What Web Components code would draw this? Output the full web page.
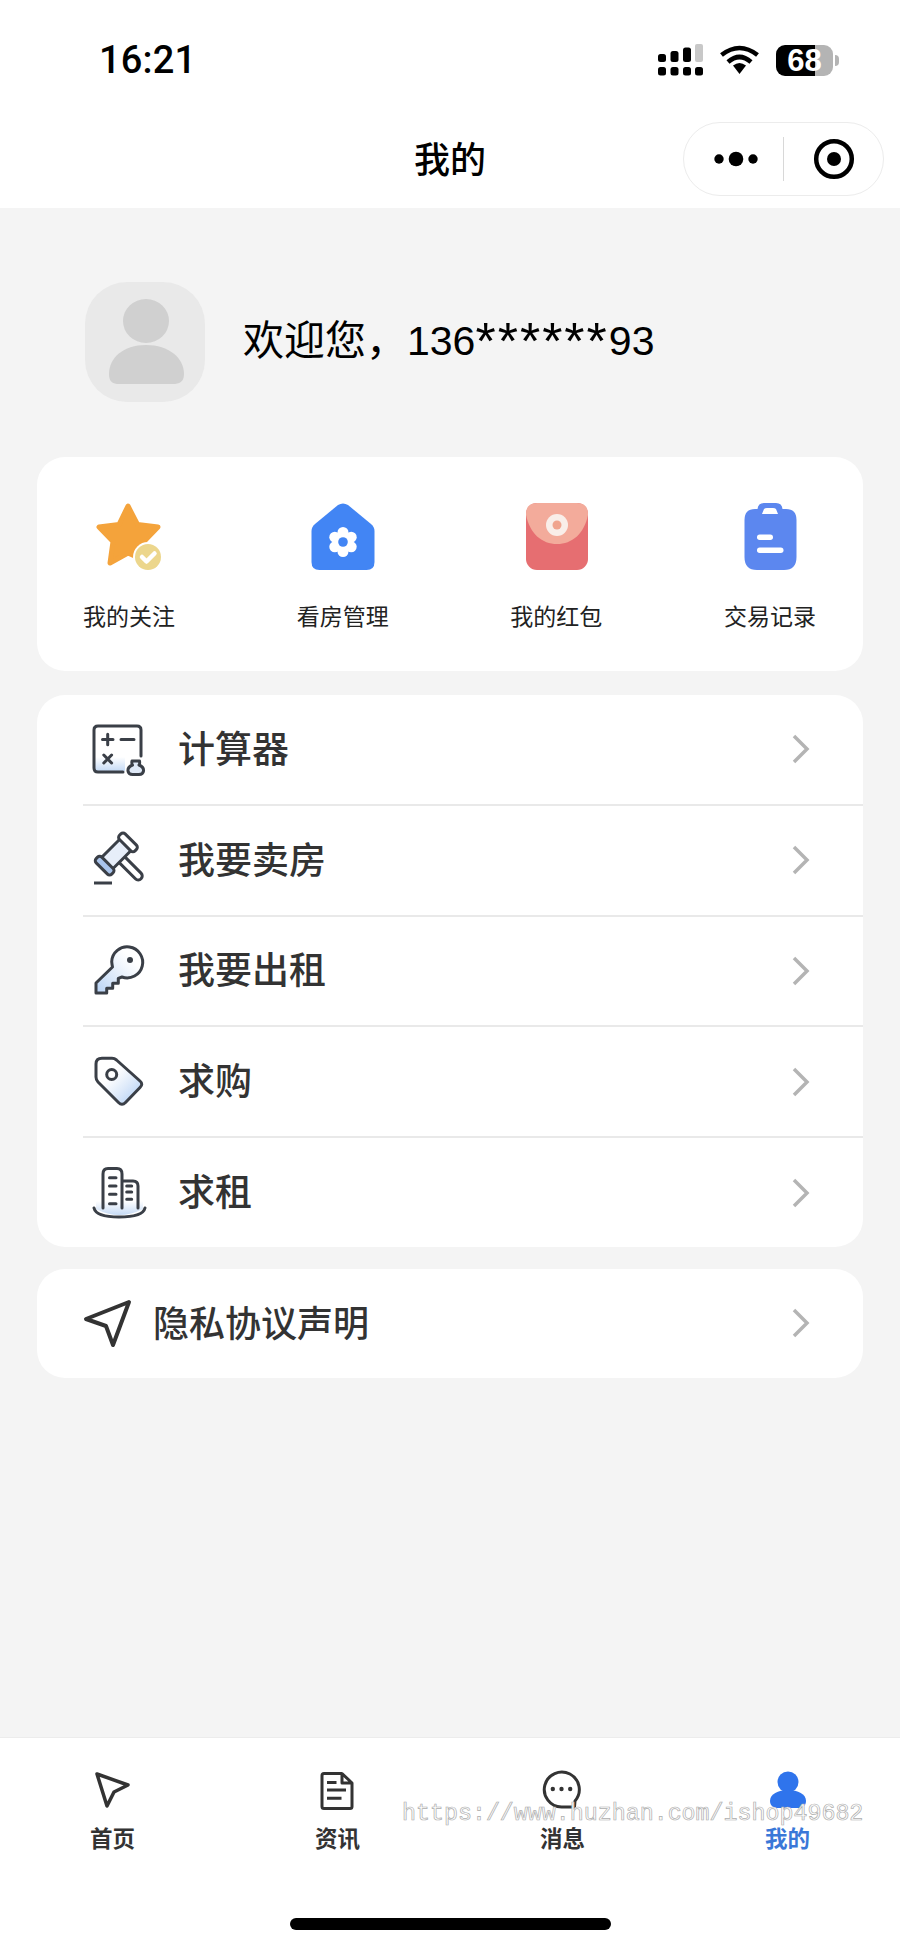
<!DOCTYPE html>
<html lang="zh">
<head>
<meta charset="utf-8">
<title>我的</title>
<style>
    html, body { margin: 0; padding: 0; }
    body {
        width: 900px;
        min-height: 1948px;
        display: flex;
        flex-direction: column;
        background: #f4f4f4;
        font-family: "Liberation Sans", "Noto Sans CJK SC", sans-serif;
    }
    .defs { display: block; width: 0; height: 0; }
</style>
</head>
<body>
<svg class="defs" width="0" height="0">
    <defs>
        <linearGradient id="fadeDown" x1="0" y1="0" x2="0" y2="1">
            <stop offset="0" stop-color="#c5daf5" stop-opacity="0"/>
            <stop offset="1" stop-color="#c5daf5"/>
        </linearGradient>
        <linearGradient id="fadeLeft" x1="1" y1="0" x2="0" y2="1">
            <stop offset="0.25" stop-color="#c5daf5" stop-opacity="0"/>
            <stop offset="1" stop-color="#b5d1f5"/>
        </linearGradient>
        <linearGradient id="fadeRight" x1="0" y1="0" x2="1" y2="1">
            <stop offset="0.35" stop-color="#c5daf5" stop-opacity="0"/>
            <stop offset="0.9" stop-color="#b5d1f5"/>
        </linearGradient>
    </defs>
</svg>

<status-bar></status-bar>
<nav-bar>我的</nav-bar>

<page-body>
    <user-head><span>欢迎您，136<i>******</i>93</span></user-head>

    <quick-card>
        <quick-item label="我的关注">
            <svg viewBox="0 0 68 68" width="68" height="68">
                <path d="M33 3 L42.500 21.500 L63 24 L49 38.500 L53 59 L33 50 L15 60 L18 38.500 L4 24 L24 21.500 Z" fill="#f4a33b" stroke="#f4a33b" stroke-width="5" stroke-linejoin="round"/>
                <circle cx="53" cy="54" r="15" fill="#fff"/>
                <circle cx="53" cy="54" r="13" fill="#ecd68c"/>
                <path d="M47 54 L51.500 58.500 L59.500 50.500" fill="none" stroke="#fff" stroke-width="4.500" stroke-linecap="round" stroke-linejoin="round"/>
            </svg>
        </quick-item>
        <quick-item label="看房管理">
            <svg viewBox="0 0 68 68" width="68" height="68">
                <path d="M29 2 Q34 -1 39 2 L62 21 Q65.500 24 65.500 28 L65.500 59 Q65.500 67 57.500 67 L10.500 67 Q2.500 67 2.500 59 L2.500 28 Q2.500 24 6 21 Z" fill="#4285f4"/>
                <g fill="#fff">
                    <circle cx="34" cy="39" r="10"/>
                    <circle cx="34" cy="29.500" r="5.500"/>
                    <circle cx="34" cy="48.500" r="5.500"/>
                    <circle cx="25.800" cy="34.200" r="5.500"/>
                    <circle cx="42.200" cy="34.200" r="5.500"/>
                    <circle cx="25.800" cy="43.800" r="5.500"/>
                    <circle cx="42.200" cy="43.800" r="5.500"/>
                </g>
                <circle cx="34" cy="39" r="4.800" fill="#4285f4"/>
            </svg>
        </quick-item>
        <quick-item label="我的红包">
            <svg viewBox="0 0 68 68" width="68" height="68">
                <rect x="4" y="0" width="62" height="67" rx="11" fill="#e66e71"/>
                <path d="M4 11 Q4 0 15 0 L55 0 Q66 0 66 11 L66 12 C62 31 50 41 35 41 C20 41 8 31 4 12 Z" fill="#f3ab9b"/>
                <circle cx="35" cy="22" r="11" fill="#f9eee9"/>
                <circle cx="35" cy="22" r="4.500" fill="#f0a48e"/>
            </svg>
        </quick-item>
        <quick-item label="交易记录">
            <svg viewBox="0 0 68 68" width="68" height="68">
                <path d="M8.500 17 Q8.500 6 19 6 L21.500 6 Q22 0 28 0 L40 0 Q46 0 46.500 6 L50 6 Q60.500 6 60.500 17 L60.500 54 Q60.500 67 48 67 L21 67 Q8.500 67 8.500 54 Z" fill="#5c87ef"/>
                <path d="M28 6 Q29 5 31 5 L37 5 Q39 5 40 6 L42 11 L26 11 Z" fill="#fff"/>
                <rect x="21" y="31.500" width="16" height="5.500" rx="2.700" fill="#fff"/>
                <rect x="21" y="44.500" width="26.500" height="5.500" rx="2.700" fill="#fff"/>
            </svg>
        </quick-item>
    </quick-card>

    <list-card>
        <list-row>
            <svg slot="icon" viewBox="0 0 60 60" width="60" height="60">
                <path d="M6 38 L6 50 Q6 52 8 52 L36 52 L36 38 Z" fill="url(#fadeDown)"/>
                <path d="M34 53 L9 53 Q5 53 5 49 L5 11 Q5 7 9 7 L48 7 Q52 7 52 11 L52 37" fill="none" stroke="#3a3f47" stroke-width="3" stroke-linecap="round"/>
                <path d="M13.500 20.500 H24 M18.700 15.300 V25.700 M32 20.500 H45 M14.800 36 L22.600 44 M22.600 36 L14.800 44" fill="none" stroke="#3a3f47" stroke-width="3" stroke-linecap="round"/>
                <path d="M43 42 L50.500 42 Q51 45 50 46 Q55 48 54.500 52 Q54 55.500 50 55.500 L43.500 55.500 Q39.500 55.500 39 52 Q38.500 48 43.500 46 Q42.500 45 43 42 Z" fill="#dfe9f7" stroke="#3a3f47" stroke-width="3" stroke-linejoin="round"/>
            </svg>
            计算器
        </list-row>
        <list-row>
            <svg slot="icon" viewBox="0 0 60 60" width="60" height="60">
                <g transform="translate(27.300 24) rotate(45)" stroke="#3a3f47" stroke-width="3" stroke-linejoin="round">
                    <rect x="2" y="-4" width="33" height="8" rx="4" fill="#fff"/>
                    <rect x="-8" y="-14" width="16" height="28" fill="#e7eef9"/>
                    <rect x="-11" y="-20.500" width="22" height="8" rx="3" fill="#fff"/>
                    <rect x="-11" y="12.500" width="22" height="8" rx="3" fill="#a9c4ec"/>
                </g>
                <path d="M5 53 H23" stroke="#3a3f47" stroke-width="3"/>
            </svg>
            我要卖房
        </list-row>
        <list-row>
            <svg slot="icon" viewBox="0 0 60 60" width="60" height="60">
                <path d="M7 42 L7 52 L17.700 52 L17.700 47.300 L23.700 47.300 L23.700 42.300 L29.300 42.300 L29.300 37.300 L33 36 A15.500 15.500 0 1 0 22.700 20.700 Q23 24 23.500 26 Z" fill="url(#fadeLeft)" stroke="#3a3f47" stroke-width="3" stroke-linejoin="round"/>
                <circle cx="41" cy="19" r="3" fill="#3a3f47"/>
            </svg>
            我要出租
        </list-row>
        <list-row>
            <svg slot="icon" viewBox="0 0 60 60" width="60" height="60">
                <path d="M7 12 Q7 6.300 13 6.300 L23 6.300 Q25.500 6.300 27.500 8 L51 29 Q54.500 32 51 35.500 L36.500 50.500 Q33 54 29.500 50.500 L9 30 Q7 28 7 25 Z" fill="url(#fadeRight)" stroke="#3a3f47" stroke-width="3" stroke-linejoin="round"/>
                <circle cx="22.700" cy="22.500" r="5" fill="none" stroke="#3a3f47" stroke-width="3"/>
            </svg>
            求购
        </list-row>
        <list-row last>
            <svg slot="icon" viewBox="0 0 60 60" width="60" height="60">
                <path d="M7 46 Q30 58 54 46 L54 38 L7 38 Z" fill="url(#fadeDown)"/>
                <path d="M14 45 L14 11 Q14 5.500 19 5.500 L28 5.500 Q33 5.500 33 11 L33 45 M33 18 L44 18 Q49 18 49 23 L49 45" fill="none" stroke="#3a3f47" stroke-width="3" stroke-linecap="round" stroke-linejoin="round"/>
                <path d="M20.500 14.700 H27 M20.500 23 H27 M20.500 31.300 H27 M20.500 40.700 H27 M37.700 23 H42.700 M37.700 29 H42.700 M37.700 36.300 H42.700" fill="none" stroke="#3a3f47" stroke-width="3" stroke-linecap="round"/>
                <path d="M5 45 Q7 54 30 54 Q54 54 56 45" fill="none" stroke="#3a3f47" stroke-width="3" stroke-linecap="round"/>
            </svg>
            求租
        </list-row>
    </list-card>

    <list-card>
        <list-row single>
            <svg slot="icon" viewBox="0 0 50 50" width="50" height="50">
                <path d="M46 4 L3 21 L23 28 L30 47 Z" fill="none" stroke="#333" stroke-width="4" stroke-linejoin="round"/>
            </svg>
            隐私协议声明
        </list-row>
    </list-card>
</page-body>

<tab-bar>
    <tab-item label="首页">
        <svg viewBox="0 0 48 48" width="48" height="48">
            <path d="M8 6 L39 17 L25 24 L18 38 Z" fill="none" stroke="#333" stroke-width="3.500" stroke-linejoin="round"/>
        </svg>
    </tab-item>
    <tab-item label="资讯">
        <svg viewBox="0 0 48 48" width="48" height="48">
            <path d="M28 5.500 L10 5.500 Q8 5.500 8 7.500 L8 38.500 Q8 40.500 10 40.500 L36 40.500 Q38 40.500 38 38.500 L38 15 L28 5.500 L28 15 L38 15" fill="none" stroke="#333" stroke-width="3" stroke-linejoin="round"/>
            <path d="M13 14.500 H22.500 M13 22 H32 M13 30.300 H27.500" fill="none" stroke="#333" stroke-width="3"/>
        </svg>
    </tab-item>
    <tab-item label="消息">
        <svg viewBox="0 0 48 48" width="48" height="48">
            <path d="M22.500 39 A17.500 17.500 0 1 1 36 33 L35.500 39 Z" fill="none" stroke="#333" stroke-width="3" stroke-linejoin="round"/>
            <circle cx="13.800" cy="21" r="2.200" fill="#333"/>
            <circle cx="22.500" cy="21" r="2.200" fill="#333"/>
            <circle cx="31.200" cy="21" r="2.200" fill="#333"/>
        </svg>
    </tab-item>
    <tab-item label="我的" active>
        <svg viewBox="0 0 48 48" width="48" height="48">
            <circle cx="24" cy="14" r="10.500" fill="#2f74ec"/>
            <path d="M6 33 C6 26 14 22 24 22 C34 22 42 26 42 33 C42 38 38 40 34 40 L14 40 C10 40 6 38 6 33 Z" fill="#2f74ec"/>
        </svg>
    </tab-item>
</tab-bar>

<script>
class StatusBar extends HTMLElement {
    constructor() {
        super();
        const shadowRoot = this.attachShadow({mode: 'open'});
        shadowRoot.innerHTML = `
            <style>
                :host {
                    display: flex;
                    justify-content: space-between;
                    align-items: center;
                    height: 120px;
                    box-sizing: border-box;
                    padding: 0 61px 0 99px;
                    background: #fff;
                    color: #000;
                }
                .time {
                    font: 500 38px Roboto, "Liberation Sans", sans-serif;
                    letter-spacing: 0.2px;
                }
                .icons { display: flex; align-items: center; gap: 17px; }
                svg { display: block; }
                .battery {
                    width: 57px;
                    height: 31px;
                    border-radius: 9px;
                    background: linear-gradient(90deg, #000 39px, #b4b4b4 39px);
                    color: #fff;
                    font: bold 31px/31px "Liberation Sans", sans-serif;
                    text-align: center;
                }
                .nub { width: 4px; height: 11px; margin-left: 2px; border-radius: 0 4px 4px 0; background: #b4b4b4; }
                .bat { display: flex; align-items: center; }
            </style>
            <div class="time">16:21</div>
            <div class="icons">
                <svg width="45" height="32" viewBox="0 0 45 32">
                    <g fill="#000">
                        <rect x="0" y="10" width="8" height="8" rx="2.500"/>
                        <rect x="12.500" y="7" width="8" height="11" rx="2.500"/>
                        <rect x="25" y="3.500" width="8" height="14.500" rx="2.500"/>
                        <rect x="0" y="23" width="8" height="8.500" rx="2.500"/>
                        <rect x="12.500" y="23" width="8" height="8.500" rx="2.500"/>
                        <rect x="25" y="23" width="8" height="8.500" rx="2.500"/>
                        <rect x="37" y="23" width="8" height="8.500" rx="2.500"/>
                    </g>
                    <rect x="37" y="0" width="8" height="18" rx="2" fill="#c8c8c8"/>
                </svg>
                <svg width="39" height="30" viewBox="0 0 39 30">
                    <path d="M1.500 10 Q19.500 -4 37.500 10 M8 17 Q19.500 7 31 17" fill="none" stroke="#000" stroke-width="4.600" stroke-linecap="butt"/>
                    <path d="M13 20.500 Q19.500 15.500 26 20.500 L19.500 29 Z" fill="#000"/>
                </svg>
                <div class="bat">
                    <div class="battery">68</div>
                    <div class="nub"></div>
                </div>
            </div>
        `;
    }
}

class NavBar extends HTMLElement {
    constructor() {
        super();
        const shadowRoot = this.attachShadow({mode: 'open'});
        shadowRoot.innerHTML = `
            <style>
                :host {
                    display: flex;
                    position: relative;
                    justify-content: center;
                    align-items: center;
                    height: 88px;
                    background: #fff;
                    color: #000;
                    font: 500 36px "Noto Sans CJK SC", sans-serif;
                }
                .capsule {
                    position: absolute;
                    right: 16px;
                    top: 2px;
                    width: 201px;
                    height: 74px;
                    box-sizing: border-box;
                    display: flex;
                    align-items: center;
                    border: 1px solid #ececec;
                    border-radius: 37px;
                    background: #fff;
                }
                .title { margin-top: -15px; }
                svg { display: block; }
            </style>
            <div class="title"><slot></slot></div>
            <div class="capsule">
                <svg width="199" height="72" viewBox="0 0 199 72">
                    <circle cx="35" cy="36" r="4.700" fill="#000"/>
                    <circle cx="52" cy="36" r="7.300" fill="#000"/>
                    <circle cx="69" cy="36" r="4.700" fill="#000"/>
                    <path d="M99.500 14 V58" stroke="#d8d8d8" stroke-width="1"/>
                    <circle cx="150" cy="36" r="17.800" fill="none" stroke="#000" stroke-width="4.500"/>
                    <circle cx="150" cy="36" r="7" fill="#000"/>
                </svg>
            </div>
        `;
    }
}

class PageBody extends HTMLElement {
    constructor() {
        super();
        const shadowRoot = this.attachShadow({mode: 'open'});
        shadowRoot.innerHTML = `
            <style>
                :host {
                    display: flex;
                    flex-direction: column;
                    flex: 1;
                    padding: 74px 37px 0;
                }
            </style>
            <slot></slot>
        `;
    }
}

class UserHead extends HTMLElement {
    constructor() {
        super();
        const shadowRoot = this.attachShadow({mode: 'open'});
        shadowRoot.innerHTML = `
            <style>
                :host {
                    display: flex;
                    align-items: center;
                    gap: 38px;
                    height: 120px;
                    margin: 0 0 55px 48px;
                    color: #000;
                    font: 41px "Liberation Sans", "Noto Sans CJK SC", sans-serif;
                }
                .avatar {
                    width: 120px;
                    height: 120px;
                    border-radius: 42px;
                    background: #e9e9e9;
                }
                svg { display: block; }
                ::slotted(span) { white-space: nowrap; margin-top: -10px; }
            </style>
            <div class="avatar">
                <svg viewBox="0 0 120 120" width="120" height="120">
                    <ellipse cx="61" cy="39" rx="23" ry="22" fill="#d0d0d0"/>
                    <path d="M24 92 C24 76 38 63 61 63 C84 63 99 76 99 92 C99 100 94 102 88 102 L34 102 C28 102 24 100 24 92 Z" fill="#d0d0d0"/>
                </svg>
            </div>
            <slot></slot>
        `;
    }
}

class QuickCard extends HTMLElement {
    constructor() {
        super();
        const shadowRoot = this.attachShadow({mode: 'open'});
        shadowRoot.innerHTML = `
            <style>
                :host {
                    display: flex;
                    justify-content: space-between;
                    height: 214px;
                    box-sizing: border-box;
                    padding: 46px 47px 0 46px;
                    border-radius: 28px;
                    background: #fff;
                }
            </style>
            <slot></slot>
        `;
    }
}

class QuickItem extends HTMLElement {
    constructor() {
        super();
        const shadowRoot = this.attachShadow({mode: 'open'});
        shadowRoot.innerHTML = `
            <style>
                :host {
                    display: flex;
                    flex-direction: column;
                    align-items: center;
                    width: 92px;
                    color: #222;
                    font: 23px/34px "Noto Sans CJK SC", sans-serif;
                }
                .label { margin-top: 27px; white-space: nowrap; }
            </style>
            <slot></slot>
            <div class="label"></div>
        `;
    }

    connectedCallback() {
        this.shadowRoot.querySelector('.label').textContent = this.getAttribute('label');
    }
}

class ListCard extends HTMLElement {
    constructor() {
        super();
        const shadowRoot = this.attachShadow({mode: 'open'});
        shadowRoot.innerHTML = `
            <style>
                :host {
                    display: block;
                    margin-top: 24px;
                    border-radius: 28px;
                    background: #fff;
                }
            </style>
            <slot></slot>
        `;
    }
}

class ListRow extends HTMLElement {
    constructor() {
        super();
        const shadowRoot = this.attachShadow({mode: 'open'});
        shadowRoot.innerHTML = `
            <style>
                :host {
                    display: flex;
                    align-items: center;
                    height: 110.8px;
                    box-sizing: border-box;
                    margin-left: 46px;
                    padding-left: 6px;
                    border-bottom: 2px solid #e9e9e9;
                    color: #333;
                    font: 500 37px "Noto Sans CJK SC", sans-serif;
                }
                :host([last]) { height: 108.8px; border-bottom: 0; }
                :host([single]) { height: 109px; padding-left: 0; border-bottom: 0; font-size: 36px; }
                :host([single]) .text { margin-left: 20px; }
                .text { flex: 1; margin-left: 29px; padding-bottom: 5px; }
                ::slotted(svg) { display: block; flex: none; }
                .arrow { display: block; margin-right: 52px; }
            </style>
            <slot name="icon"></slot>
            <div class="text"><slot></slot></div>
            <svg class="arrow" width="20" height="32" viewBox="0 0 20 32">
                <path d="M3 3 L16 16 L3 29" fill="none" stroke="#b4b4b4" stroke-width="3.500"/>
            </svg>
        `;
    }
}

class TabBar extends HTMLElement {
    constructor() {
        super();
        const shadowRoot = this.attachShadow({mode: 'open'});
        shadowRoot.innerHTML = `
            <style>
                :host {
                    display: block;
                    position: relative;
                    height: 211px;
                    box-sizing: border-box;
                    border-top: 1px solid #ececec;
                    background: #fff;
                }
                .tabs { display: grid; grid-template-columns: repeat(4, 225px); padding-top: 30px; }
                .mark {
                    position: absolute;
                    left: 402px;
                    top: 61px;
                    color: #fff;
                    -webkit-text-stroke: 0.7px #adadad;
                    font: 23.3px/30px "Liberation Mono", monospace;
                    white-space: nowrap;
                }
                .home {
                    position: absolute;
                    left: 290px;
                    top: 180px;
                    width: 321px;
                    height: 12px;
                    border-radius: 6px;
                    background: #000;
                }
            </style>
            <div class="tabs"><slot></slot></div>
            <div class="mark">https://www.huzhan.com/ishop49682</div>
            <div class="home"></div>
        `;
    }
}

class TabItem extends HTMLElement {
    constructor() {
        super();
        const shadowRoot = this.attachShadow({mode: 'open'});
        shadowRoot.innerHTML = `
            <style>
                :host {
                    display: flex;
                    flex-direction: column;
                    align-items: center;
                    color: #333;
                    font: 600 22.5px/32px "Noto Sans CJK SC", sans-serif;
                }
                :host([active]) { color: #3a78d8; }
                ::slotted(svg) { display: block; }
                .label { margin-top: 4.500px; }
            </style>
            <slot></slot>
            <div class="label"></div>
        `;
    }

    connectedCallback() {
        this.shadowRoot.querySelector('.label').textContent = this.getAttribute('label');
    }
}

customElements.define('status-bar', StatusBar);
customElements.define('nav-bar', NavBar);
customElements.define('page-body', PageBody);
customElements.define('user-head', UserHead);
customElements.define('quick-card', QuickCard);
customElements.define('quick-item', QuickItem);
customElements.define('list-card', ListCard);
customElements.define('list-row', ListRow);
customElements.define('tab-bar', TabBar);
customElements.define('tab-item', TabItem);
</script>
<style>
    user-head i {
        font-style: normal;
        font-size: 52px;
        line-height: 0;
        letter-spacing: 2px;
        vertical-align: -4px;
    }
    list-card:last-of-type { margin-top: 22px; }
</style>
</body>
</html>
